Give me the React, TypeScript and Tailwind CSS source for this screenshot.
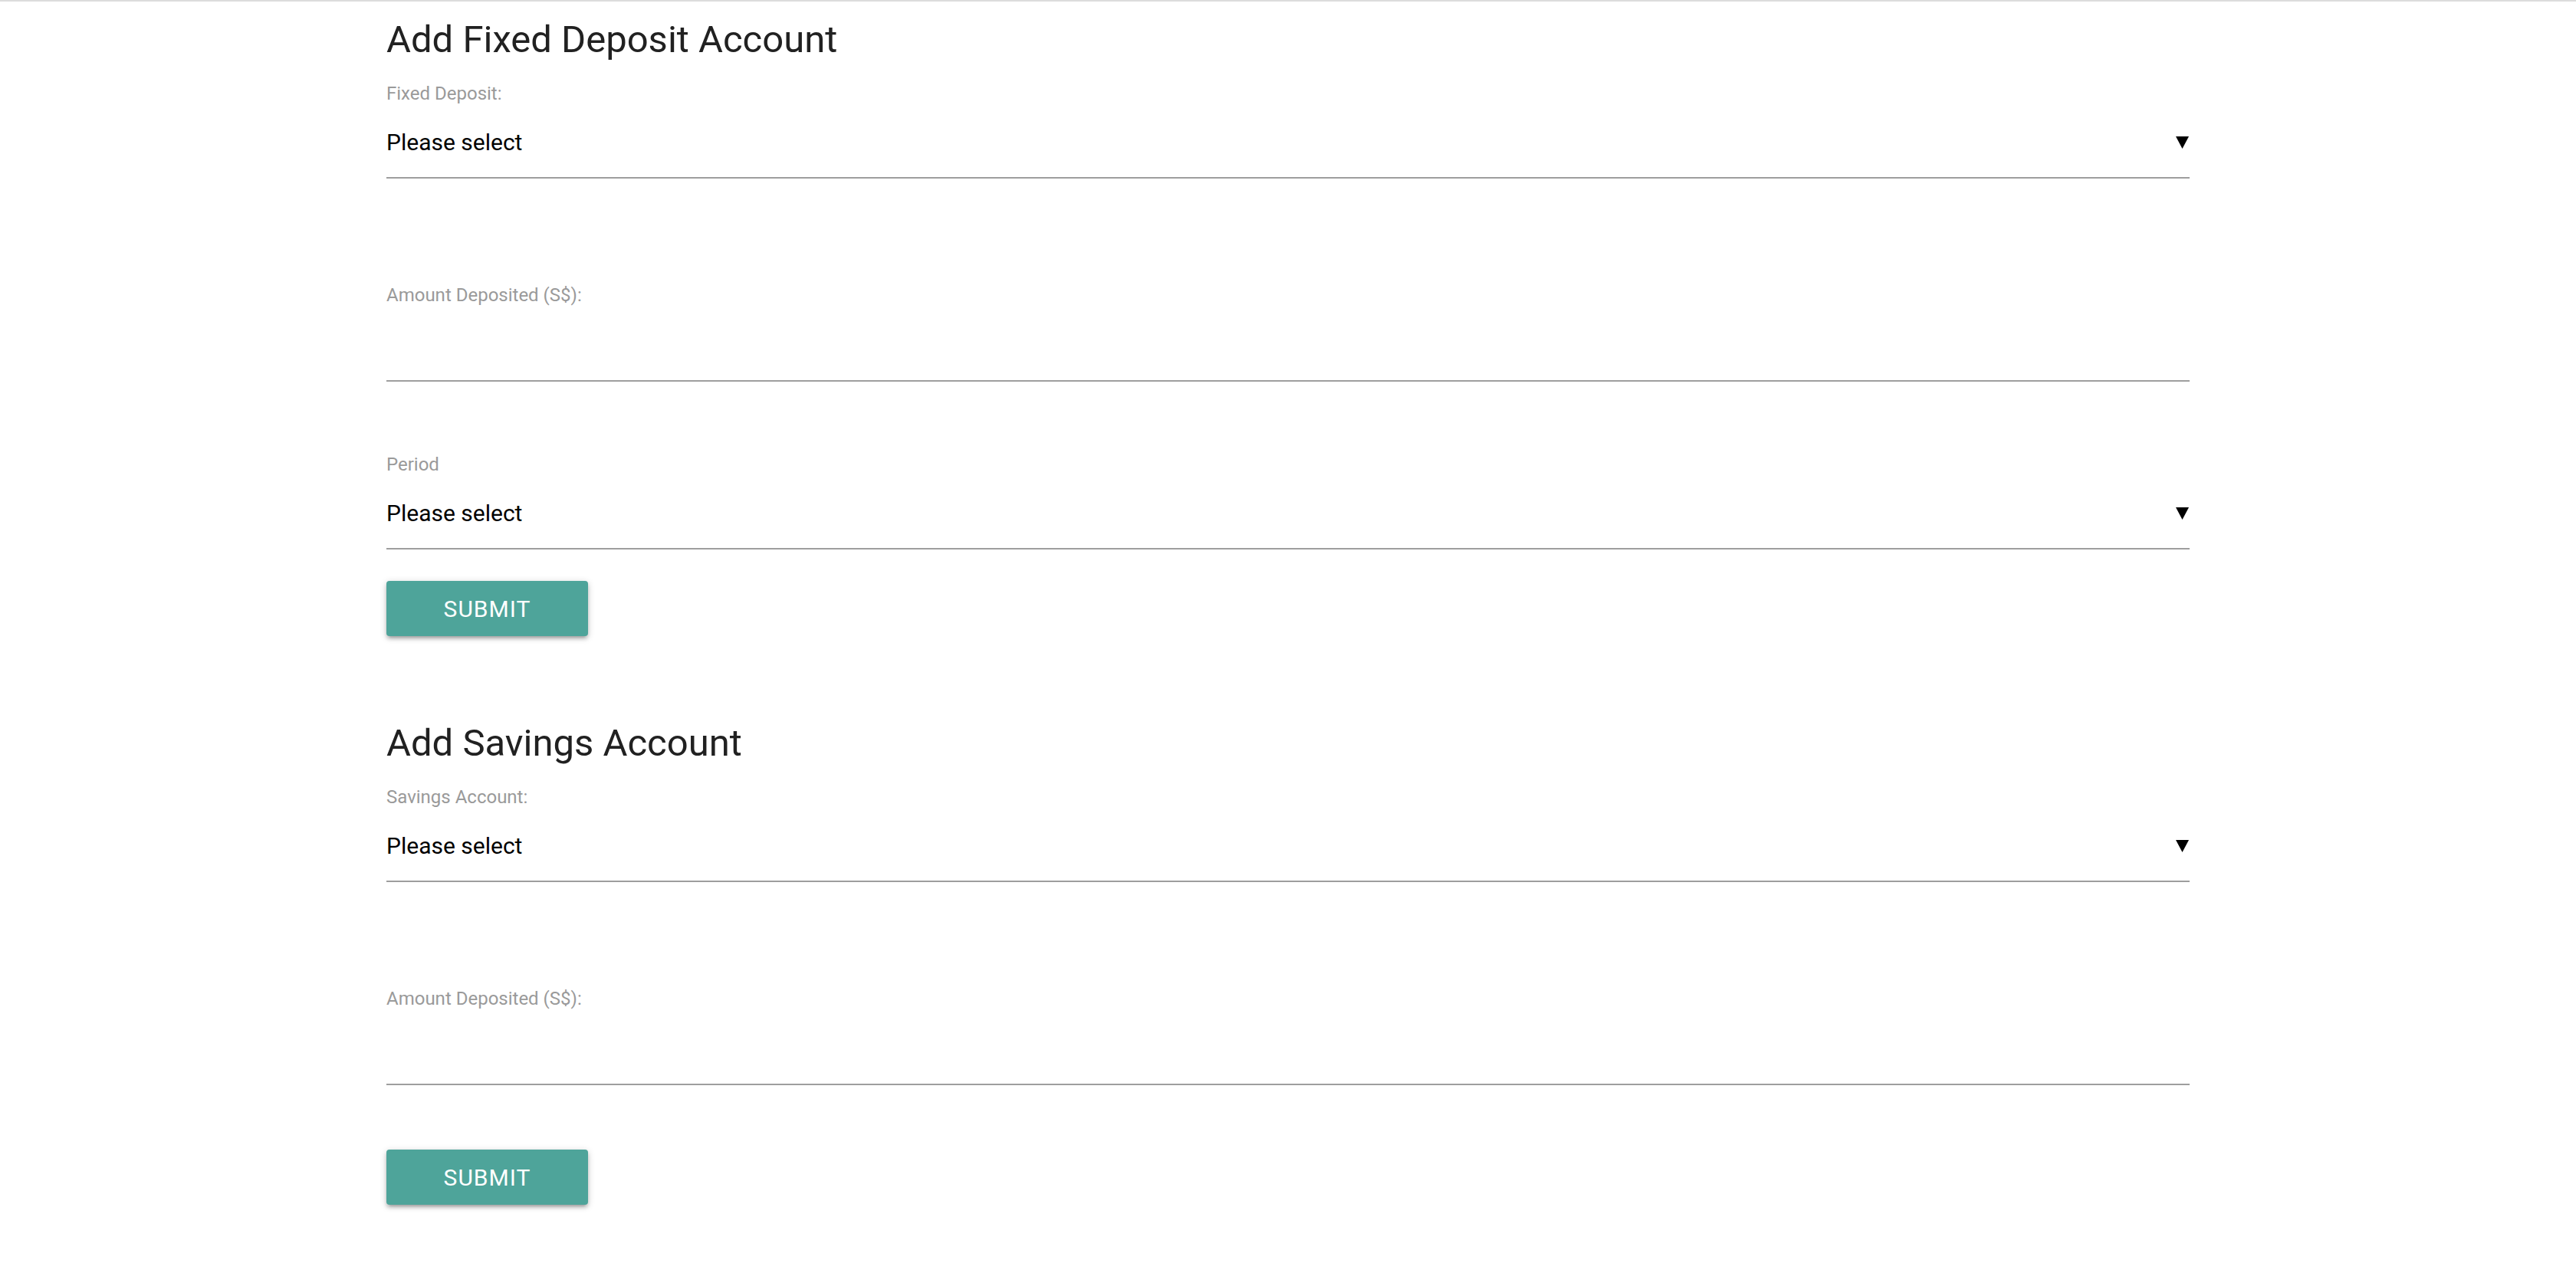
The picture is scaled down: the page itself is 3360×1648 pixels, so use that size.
import React from "react";

function Triangle() {
  return (
    <svg width="17" height="16" viewBox="0 0 17 16" className="mr-[1px] shrink-0">
      <polygon points="0,0 17,0 8.5,16" fill="#000" />
    </svg>
  );
}

function Heading({ children, className }: { children: React.ReactNode; className: string }) {
  return (
    <h2 className={`h-[60px] text-[49px] leading-[60px] font-normal text-[#212121] ${className}`}>
      {children}
    </h2>
  );
}

function Label({ children, className }: { children: React.ReactNode; className: string }) {
  return <div className={`text-[24px] leading-[30px] text-[#9a9a9a] ${className}`}>{children}</div>;
}

function SelectField() {
  return (
    <div className="mt-[31px] flex items-center justify-between border-b-2 border-[#9e9e9e] pb-[27px] text-[30px] leading-[36px] text-black">
      <span>Please select</span>
      <Triangle />
    </div>
  );
}

function InputField() {
  return <div className="h-[98px] border-b-2 border-[#9e9e9e]" />;
}

function SubmitButton({ className }: { className: string }) {
  return (
    <button
      className={`flex h-[72px] w-[263px] items-center justify-center rounded-[4px] bg-[#4ea49a] text-[30px] uppercase tracking-[1px] text-white shadow-[0_4px_4px_0_rgba(0,0,0,0.14),0_6px_2px_-4px_rgba(0,0,0,0.12),0_2px_10px_0_rgba(0,0,0,0.2)] ${className}`}
    >
      Submit
    </button>
  );
}

export default function App() {
  return (
    <div className="min-h-[1648px] bg-white font-['Roboto','Liberation_Sans',sans-serif]">
      <div className="h-[2px] bg-[#dcdcdc]" />
      <div className="mx-auto w-[2352px]">
        <section>
          <Heading className="mt-[20px]">Add Fixed Deposit Account</Heading>
          <Label className="mt-[25px]">Fixed Deposit:</Label>
          <SelectField />
          <Label className="mt-[137px]">Amount Deposited (S$):</Label>
          <InputField />
          <Label className="mt-[93px]">Period</Label>
          <SelectField />
          <SubmitButton className="mt-[41px]" />
        </section>
        <section>
          <Heading className="mt-[110px]">Add Savings Account</Heading>
          <Label className="mt-[25px]">Savings Account:</Label>
          <SelectField />
          <Label className="mt-[137px]">Amount Deposited (S$):</Label>
          <InputField />
          <SubmitButton className="mt-[84px]" />
        </section>
      </div>
    </div>
  );
}
